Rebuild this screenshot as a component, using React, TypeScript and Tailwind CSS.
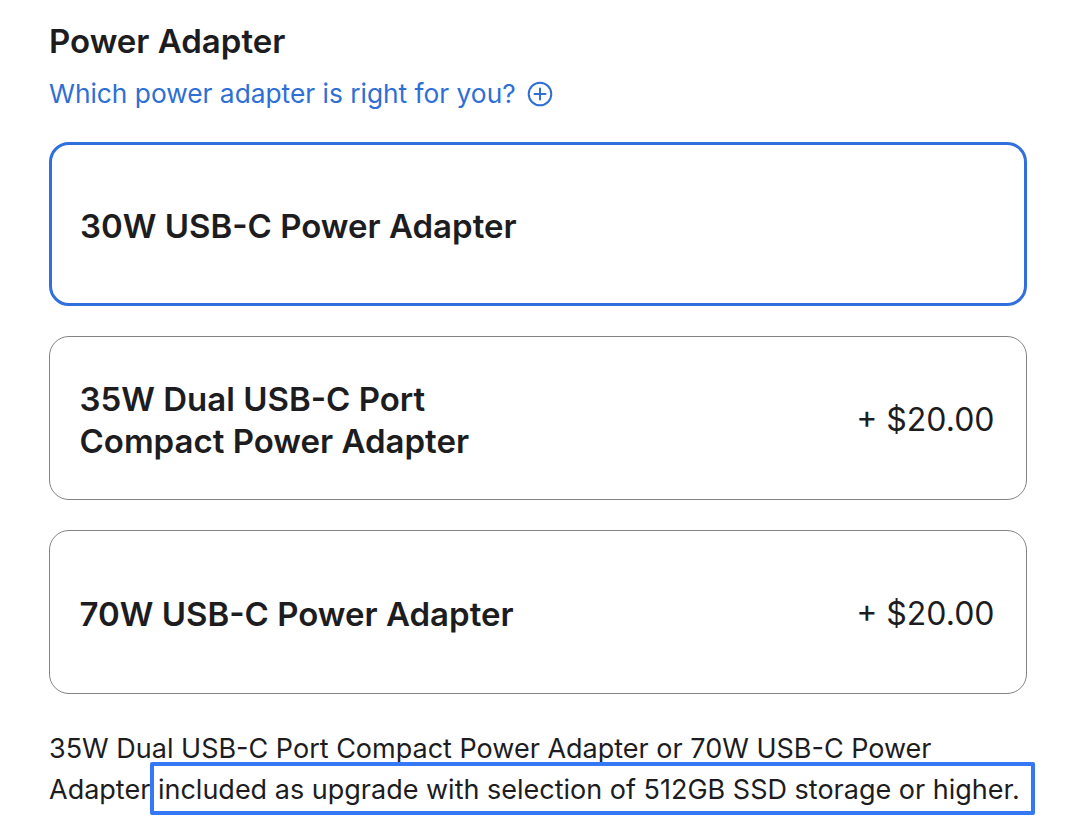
import React from "react";

function PlusCircle() {
  return (
    <svg width="26" height="26" viewBox="0 0 26 26" fill="none" className="ml-[11px] shrink-0">
      <circle cx="13" cy="13" r="11.3" stroke="#2e6fd6" strokeWidth="2" />
      <path d="M13 7.5v11M7.5 13h11" stroke="#2e6fd6" strokeWidth="2" strokeLinecap="round" />
    </svg>
  );
}

function Card({ selected, children, price }: { selected?: boolean; children: React.ReactNode; price?: string }) {
  return (
    <div
      className={
        selected
          ? "flex h-[164px] items-center justify-between rounded-[20px] border-[3px] border-[#2f70de] pl-[28px] pr-[30px] pt-[3px]"
          : "flex h-[164px] items-center justify-between rounded-[20px] border-[1.5px] border-[#838385] pl-[29.5px] pr-[31.5px] pt-[3px]"
      }
    >
      <div className="text-[33px] font-semibold leading-[42px] text-[#1d1d1f]">{children}</div>
      {price && <div className="text-[32px] font-normal leading-[42px] text-[#1d1d1f]">{price}</div>}
    </div>
  );
}

export default function App() {
  return (
    <div
      className="min-h-[830px] w-[1086px] bg-white pl-[49px] pr-[59px] pt-[20px]"
      style={{ fontFamily: "Inter, 'Noto Sans', 'Liberation Sans', sans-serif" }}
    >
      <h2 className="text-[33px] font-semibold leading-[42px] text-[#1d1d1f]">Power Adapter</h2>
      <div className="mt-[14px] flex items-center text-[26.3px] leading-[36px] text-[#2e6fd6]">
        <span>Which power adapter is right for you?</span>
        <PlusCircle />
      </div>
      <div className="mt-[30px] flex flex-col gap-[30px]">
        <Card selected>30W USB-C Power Adapter</Card>
        <Card price="+ $20.00">
          35W Dual USB-C Port
          <br />
          Compact Power Adapter
        </Card>
        <Card price="+ $20.00">70W USB-C Power Adapter</Card>
      </div>
      <div className="relative mt-[34px] text-[27px] leading-[41px] text-[#1d1d1f]">
        <p>
          35W Dual USB-C Port Compact Power Adapter or 70W USB-C Power Adapter included as upgrade with selection of
          512GB SSD storage or higher.
        </p>
        <div className="pointer-events-none absolute left-[101px] top-[34px] h-[53px] w-[885px] rounded-[2px] border-[4px] border-[#3478f6]" />
      </div>
    </div>
  );
}
